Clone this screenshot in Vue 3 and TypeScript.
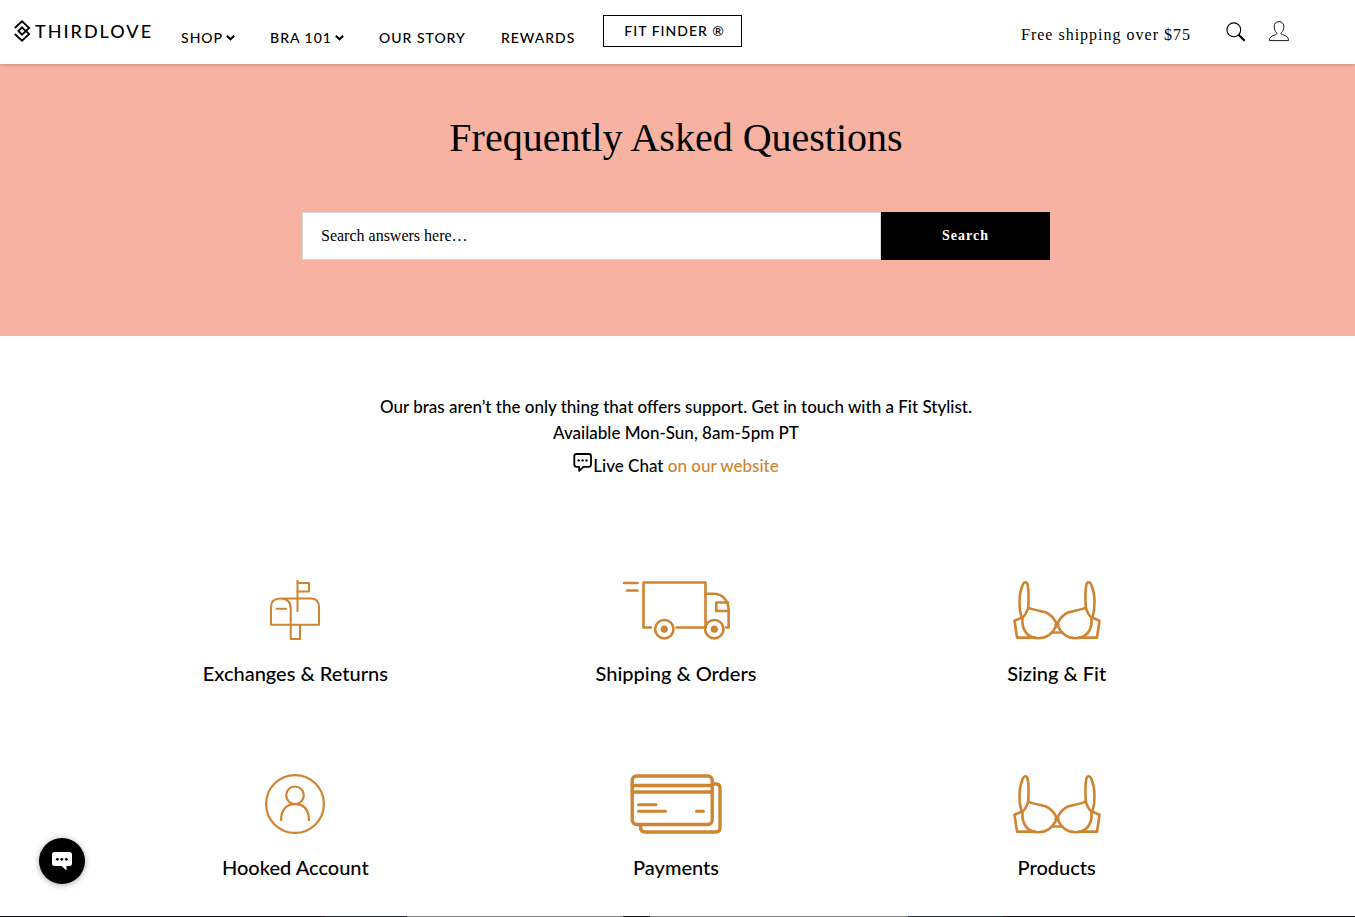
<script setup lang="ts">
interface NavItem {
  label: string
  menu: boolean
}

interface Topic {
  label: string
  icon: 'mailbox' | 'truck' | 'bra' | 'account' | 'cards'
}

const navItems: NavItem[] = [
  { label: 'SHOP', menu: true },
  { label: 'BRA 101', menu: true },
  { label: 'OUR STORY', menu: false },
  { label: 'REWARDS', menu: false },
]

const topics: Topic[] = [
  { label: 'Exchanges & Returns', icon: 'mailbox' },
  { label: 'Shipping & Orders', icon: 'truck' },
  { label: 'Sizing & Fit', icon: 'bra' },
  { label: 'Hooked Account', icon: 'account' },
  { label: 'Payments', icon: 'cards' },
  { label: 'Products', icon: 'bra' },
]

const braSides: string[] = ['', 'matrix(-1 0 0 1 88 0)']
</script>

<template>
  <div class="page">
    <header class="header">
      <a class="logo" href="#">
        <svg class="logo-mark" width="17" height="22" viewBox="0 0 17 22" fill="none" stroke="#000" stroke-width="1.8" aria-hidden="true">
          <path d="M0.800 8 L8 1.300 L15.200 8 L8 14.700 L4.400 11 L8 7.300 L11.600 11" />
          <path d="M0.800 14 L8 20.700 L15.200 14 L11.600 10.600" />
        </svg>
        <span>THIRDLOVE</span>
      </a>
      <nav class="nav" aria-label="Main">
        <a v-for="item in navItems" :key="item.label" class="nav-link" href="#">
          {{ item.label }}
          <svg v-if="item.menu" width="9" height="6" viewBox="0 0 9 6" fill="none" stroke="#000" stroke-width="2" aria-hidden="true">
            <path d="M0.800 0.800 L4.500 4.300 L8.200 0.800" />
          </svg>
        </a>
      </nav>
      <a class="fit-finder" href="#">FIT FINDER ®</a>
      <span class="promo">Free shipping over $75</span>
      <button class="icon-button" type="button" aria-label="Search the store">
        <svg width="20" height="20" viewBox="0 0 20 20" fill="none" stroke="#000" aria-hidden="true">
          <circle cx="7.800" cy="7.800" r="6.900" stroke-width="1.100" />
          <path d="M12.600 12.800 L18.600 18.800" stroke-width="2" />
        </svg>
      </button>
      <a class="icon-button" href="#" aria-label="Account">
        <svg width="20" height="23" viewBox="0 0 20 23" fill="none" stroke="#000" stroke-width="0.900" aria-hidden="true">
          <path d="M0.500 19.600 C0.400 16.200 2.300 15.200 5 14.200 C7.600 13.400 8.300 13 7.700 11.900 C6 10.200 5.200 8 5.200 5.700 C5.200 2.500 7 0.600 10 0.600 C13 0.600 14.800 2.500 14.800 5.700 C14.800 8 14 10.200 12.300 11.900 C11.700 13 12.400 13.400 15 14.200 C17.700 15.200 19.600 16.200 19.500 19.600 Z" />
        </svg>
      </a>
    </header>

    <section class="hero">
      <h1>Frequently Asked Questions</h1>
      <form class="search" role="search" @submit.prevent>
        <input type="search" placeholder="Search answers here…" aria-label="Search answers" />
        <button type="submit">Search</button>
      </form>
    </section>

    <main class="content">
      <div class="intro">
        <p>Our bras aren’t the only thing that offers support. Get in touch with a Fit Stylist.</p>
        <p>Available Mon-Sun, 8am-5pm PT</p>
        <p class="live-chat">
          <svg width="20" height="20" viewBox="0 0 20 20" fill="none" aria-hidden="true">
            <path d="M3.500 1 H15.800 Q18 1 18 3.200 V11.600 Q18 13.800 15.800 13.800 H10.500 L6.200 17.800 V13.800 H3.500 Q1.300 13.800 1.300 11.600 V3.200 Q1.300 1 3.500 1 Z" stroke="#000" stroke-width="1.800" stroke-linejoin="round" />
            <g fill="#000">
              <circle cx="5.700" cy="7.400" r="1.200" />
              <circle cx="9.600" cy="7.400" r="1.200" />
              <circle cx="13.500" cy="7.400" r="1.200" />
            </g>
          </svg>
          <span>Live Chat <a href="#">on our website</a></span>
        </p>
      </div>

      <div class="topics">
        <a v-for="topic in topics" :key="topic.label" class="topic" href="#">
          <svg v-if="topic.icon === 'mailbox'" width="52" height="60" viewBox="0 0 52 60" class="line-icon" stroke-width="2" aria-hidden="true">
            <path d="M11 18.500 H42 Q50 18.500 50 27 V44.800 H2 V27.500 Q2 18.500 11 18.500 Q21.700 18.500 21.700 28 V44.800" />
            <path d="M7.500 28.700 H17" />
            <path d="M28.500 0.500 V31" />
            <path d="M28.500 3 H40 V11.500 H28.500" />
            <path d="M21.700 45 V59 H31 V45" />
          </svg>
          <svg v-else-if="topic.icon === 'truck'" width="108" height="60" viewBox="0 0 108 60" class="line-icon" stroke-width="2.600" aria-hidden="true">
            <path d="M2 3 H15.500 M5 10.500 H15.500" />
            <path d="M29 47.500 H21.500 V2.500 H83.500 V47.500 H54.500" />
            <path d="M83.500 13.700 H91.500 C100.500 13.700 106.600 20.500 106.600 30 V47.500 H104" />
            <path d="M106 22.500 H94.300 V31 H106.300" />
            <circle cx="42.300" cy="49.200" r="9.200" />
            <circle cx="92.300" cy="49.200" r="9.200" />
            <circle cx="42.300" cy="49.200" r="3.600" class="solid" />
            <circle cx="92.300" cy="49.200" r="3.600" class="solid" />
          </svg>
          <svg v-else-if="topic.icon === 'bra'" width="88" height="60" viewBox="0 0 88 60" class="line-icon" stroke-width="2.600" aria-hidden="true">
            <g v-for="side in braSides" :key="side" :transform="side || undefined">
              <path d="M8.500 37.500 C5.500 27 5.800 14 9.600 5 C11 1.400 14 1.400 14.700 5 C16 12 15.700 20 15.200 27.700" />
              <path d="M15.200 27.700 C13.800 32 12.500 35.300 9.800 37.300 L1.500 40.700 L4 57.600 H22" />
              <path d="M15.200 27.700 C20 30 28 30.800 32.500 32.300 C38 34.500 41.500 39 44 44.500 C41 51 36 58.300 25.500 58.300 C14.500 58.300 8.500 50 9.500 38" />
            </g>
            <path d="M42.500 44.800 H45.500 M39.800 52.500 H48.200" />
          </svg>
          <svg v-else-if="topic.icon === 'account'" width="60" height="60" viewBox="0 0 60 60" class="line-icon butt" stroke-width="2.200" aria-hidden="true">
            <circle cx="30" cy="30" r="28.900" />
            <circle cx="30" cy="21.300" r="8.800" />
            <path d="M16 47 C16 36.500 20.500 30.200 30 30.200 C39.500 30.200 44 36.500 44 47" />
          </svg>
          <svg v-else width="92" height="60" viewBox="0 0 92 60" class="line-icon" stroke-width="3.400" aria-hidden="true">
            <rect x="2.200" y="2" width="80" height="48.500" rx="4.500" />
            <path d="M2.200 11.500 H82.200 M2.200 18 H82.200" />
            <path d="M84 10 H86 Q90 10 90 14.500 V53.500 Q90 58 85.500 58 H15 Q10.500 58 10.500 52.500" />
            <path d="M8.500 30.700 H26 M8.500 37.200 H35.500 M66.500 37.200 H73.500" stroke-width="3" />
          </svg>
          <span>{{ topic.label }}</span>
        </a>
      </div>
    </main>

    <footer class="footer-edge"></footer>

    <button class="chat" type="button" aria-label="Open chat">
      <svg width="20" height="20" viewBox="0 0 20 20" aria-hidden="true">
        <path d="M2.500 1 H17.500 Q20 1 20 3.500 V12.500 Q20 15 17.500 15 H14.500 V19.500 L9.500 15 H2.500 Q0 15 0 12.500 V3.500 Q0 1 2.500 1 Z" fill="#fff" />
        <circle cx="5.300" cy="8.300" r="1.400" />
        <circle cx="9.800" cy="8.300" r="1.400" />
        <circle cx="14.300" cy="8.300" r="1.400" />
      </svg>
    </button>
  </div>
</template>

<style>
body {
  margin: 0;
  background: #fff;
}
</style>

<style scoped>
.page {
  display: flex;
  flex-direction: column;
  min-height: 100vh;
  color: #000;
  font-family: Lato, "Liberation Sans", sans-serif;
  font-weight: 500;
}

a {
  color: inherit;
  text-decoration: none;
}

.header {
  position: relative;
  display: flex;
  align-items: center;
  height: 64px;
  padding: 0 66px 0 14px;
  box-sizing: border-box;
  background: #fff;
  box-shadow: 0 1px 4px rgba(0, 0, 0, 0.2);
}

.logo {
  display: flex;
  align-items: center;
  gap: 4px;
  margin-bottom: 2px;
  font-size: 18px;
  letter-spacing: 2px;
}

.nav {
  display: flex;
  gap: 35px;
  margin: 12px 28px 0 28px;
}

.nav-link,
.fit-finder {
  font-size: 14px;
  line-height: 20px;
  letter-spacing: 1px;
  white-space: nowrap;
}

.nav-link {
  display: flex;
  align-items: center;
  gap: 3px;
}

.fit-finder {
  padding: 5px 16px 5px 20px;
  margin-bottom: 2px;
  border: 1px solid #000;
}

.promo {
  margin: 6px 35px 0 auto;
  font-family: "Liberation Serif", serif;
  font-size: 16px;
  letter-spacing: 1px;
}

.icon-button {
  display: flex;
  padding: 0;
  border: 0;
  background: none;
}

.icon-button + .icon-button {
  margin-left: 23px;
}

.hero {
  display: flex;
  flex-direction: column;
  align-items: center;
  padding: 48px 3px 76px 0;
  background: #f8b2a2;
}

h1 {
  margin: 0 0 48px;
  font-family: "Liberation Serif", serif;
  font-size: 40px;
  font-weight: 400;
  line-height: 52px;
}

.search {
  display: flex;
  width: 748px;
  max-width: 100%;
  height: 48px;
}

.search input {
  flex: 1;
  min-width: 0;
  padding: 0 18px;
  border: 1px solid #d8d8d8;
  border-radius: 0;
  outline: 0;
  background: #fff;
  font-family: "Liberation Serif", serif;
  font-size: 16px;
}

.search input::placeholder {
  color: #000;
  opacity: 1;
}

.search button {
  width: 169px;
  border: 0;
  background: #000;
  color: #fff;
  font-family: "Liberation Serif", serif;
  font-size: 14px;
  font-weight: 700;
  letter-spacing: 1px;
}

.content {
  flex: 1;
  padding: 58px 3px 32px 0;
}

.intro {
  text-align: center;
  font-size: 17px;
  line-height: 26px;
}

.intro p {
  margin: 0;
}

.intro .live-chat {
  display: flex;
  justify-content: center;
  margin-top: 7px;
}

.live-chat a {
  color: #cf8432;
}

.topics {
  display: grid;
  grid-template-columns: repeat(3, 1fr);
  row-gap: 88px;
  max-width: 1142px;
  margin: 101px auto 0;
}

.topic {
  display: flex;
  flex-direction: column;
  align-items: center;
  gap: 20px;
  font-size: 20px;
  line-height: 26px;
}

.line-icon {
  fill: none;
  stroke: #cf8432;
  stroke-linecap: round;
  stroke-linejoin: round;
}

.butt {
  stroke-linecap: butt;
}

.solid {
  fill: #cf8432;
  stroke: none;
}

.footer-edge {
  height: 1px;
  background: linear-gradient(
    90deg,
    #121014 24%,
    #22262c 24% 30%,
    #858585 30% 46%,
    #15161c 46% 48%,
    #858585 48% 67%,
    #202a34 67% 74%,
    #121014 74%
  );
}

.chat {
  position: fixed;
  left: 39px;
  bottom: 33px;
  display: flex;
  align-items: center;
  justify-content: center;
  width: 46px;
  height: 46px;
  padding: 0;
  border: 0;
  border-radius: 50%;
  background: #000;
  box-shadow: 0 1px 6px rgba(0, 0, 0, 0.35);
}
</style>
